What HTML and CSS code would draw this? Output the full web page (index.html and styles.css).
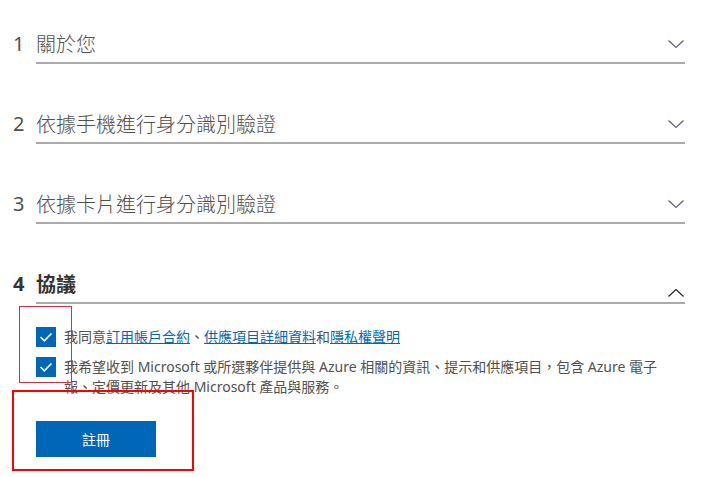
FILE: index.html
```html
<!DOCTYPE html>
<html lang="zh-Hant">
<head>
<meta charset="utf-8">
<title>註冊</title>
<link rel="stylesheet" href="styles.css">
</head>
<body>
<div class="steps">
  <section class="step">
    <span class="num">1</span>
    <div class="head">
      <span class="title">關於您</span>
      <svg class="chev" width="16" height="8" viewBox="0 0 16 8"><polyline points="0.5,0.5 8,7.5 15.5,0.5" fill="none" stroke="#6a5a8c" stroke-width="1.2"/></svg>
    </div>
  </section>
  <section class="step">
    <span class="num">2</span>
    <div class="head">
      <span class="title">依據手機進行身分識別驗證</span>
      <svg class="chev" width="16" height="8" viewBox="0 0 16 8"><polyline points="0.5,0.5 8,7.5 15.5,0.5" fill="none" stroke="#6a5a8c" stroke-width="1.2"/></svg>
    </div>
  </section>
  <section class="step">
    <span class="num">3</span>
    <div class="head">
      <span class="title">依據卡片進行身分識別驗證</span>
      <svg class="chev" width="16" height="8" viewBox="0 0 16 8"><polyline points="0.5,0.5 8,7.5 15.5,0.5" fill="none" stroke="#6a5a8c" stroke-width="1.2"/></svg>
    </div>
  </section>
  <section class="step active">
    <span class="num">4</span>
    <div class="body">
      <div class="head">
        <span class="title">協議</span>
        <svg class="chev up" width="16" height="8" viewBox="0 0 16 8"><polyline points="0.5,7.5 8,0.5 15.5,7.5" fill="none" stroke="#222" stroke-width="1.2"/></svg>
      </div>
    </div>
  </section>
</div>

<div class="agreement">
  <label class="check-item">
    <span class="box"><svg width="20" height="20" viewBox="0 0 20 20"><polyline points="4.5,10 8.3,13.8 15.5,6.5" fill="none" stroke="#fff" stroke-width="1.6"/></svg></span>
    <span class="label">我同意<a href="#">訂用帳戶合約</a>、<a href="#">供應項目詳細資料</a>和<a href="#">隱私權聲明</a></span>
  </label>
  <label class="check-item second">
    <span class="box"><svg width="20" height="20" viewBox="0 0 20 20"><polyline points="4.5,10 8.3,13.8 15.5,6.5" fill="none" stroke="#fff" stroke-width="1.6"/></svg></span>
    <span class="label">我希望收到 Microsoft 或所選夥伴提供與 Azure 相關的資訊、提示和供應項目，包含 Azure 電子報、定價更新及其他 Microsoft 產品與服務。</span>
  </label>
  <button class="submit" type="button">註冊</button>
</div>

<div class="mark mark-thin"></div>
<div class="mark mark-thick"></div>
</body>
</html>
```
FILE: styles.css
```css
html, body {
  margin: 0;
  padding: 0;
  background: #fff;
}
body {
  font-family: "Segoe UI", "Noto Sans", "Noto Sans CJK TC", sans-serif;
  color: #505050;
  width: 708px;
  height: 477px;
  overflow: hidden;
  position: relative;
}
.steps {
  display: flex;
  flex-direction: column;
  gap: 46px;
  padding-top: 30px;
}
.step {
  display: flex;
  align-items: flex-start;
  font-size: 20px;
  line-height: 28px;
}
.num {
  margin-left: 13px;
  width: 23px;
  flex: none;
}
.head {
  flex: 1;
  margin-right: 23px;
  display: flex;
  justify-content: space-between;
  align-items: center;
  border-bottom: 2px solid #ababab;
  padding-bottom: 4px;
}
.body {
  flex: 1;
  display: flex;
  flex-direction: column;
}
.body .head {
  margin-right: 23px;
}
.title {
  font-family: "Noto Sans CJK TC", sans-serif;
  font-weight: 300;
}
.chev {
  margin-right: 1px;
  display: block;
}
.chev.up {
  align-self: flex-end;
  margin-bottom: 1px;
}
.step.active .num,
.step.active .title {
  font-weight: 700;
  color: #333;
}
.agreement {
  padding-left: 36px;
  margin-top: 23px;
  display: flex;
  flex-direction: column;
  align-items: flex-start;
}
.check-item {
  display: flex;
  align-items: flex-start;
  gap: 8px;
  font-size: 14px;
  line-height: 20px;
  width: 640px;
}
.check-item.second {
  margin-top: 10px;
}
.box {
  flex: none;
  width: 20px;
  height: 20px;
  background: #0067b8;
  display: block;
}
.box svg {
  display: block;
}
.label {
  font-family: "Segoe UI", "Noto Sans", "Noto Sans CJK TC", sans-serif;
  color: #505050;
  width: 600px;
}
.label a {
  color: #0067b8;
  text-decoration: underline;
}
.submit {
  margin-top: 24px;
  width: 120px;
  height: 36px;
  background: #0067b8;
  color: #fff;
  border: none;
  font-family: "Noto Sans CJK TC", sans-serif;
  font-size: 14px;
  padding: 0;
}
.mark {
  position: absolute;
  box-sizing: border-box;
  pointer-events: none;
}
.mark-thin {
  left: 19px;
  top: 306px;
  width: 53px;
  height: 77px;
  border: 1px solid #e02b3c;
}
.mark-thick {
  left: 12px;
  top: 390px;
  width: 182px;
  height: 81px;
  border: 2.5px solid #ff0000;
}
```
